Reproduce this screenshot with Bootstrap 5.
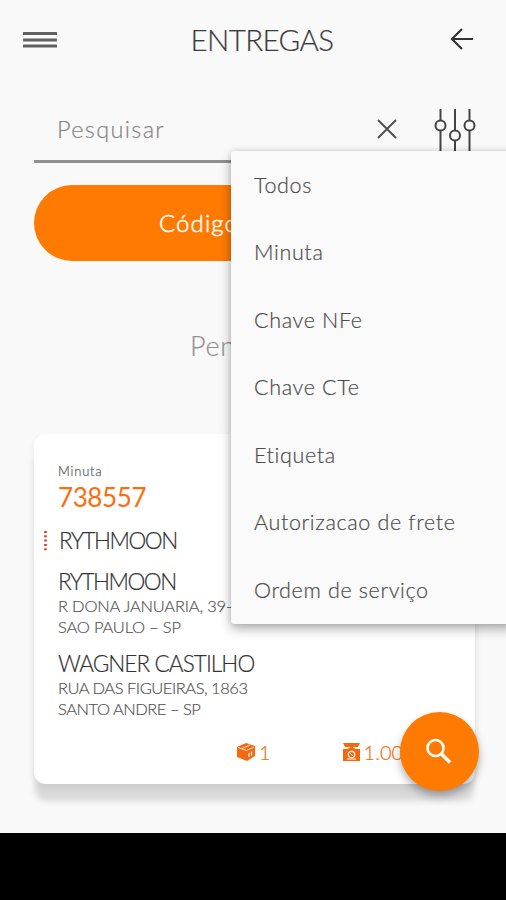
<!DOCTYPE html>
<html lang="pt-BR">
<head>
<meta charset="utf-8">
<meta name="viewport" content="width=device-width, initial-scale=1">
<title>Entregas</title>
<link href="https://cdn.jsdelivr.net/npm/bootstrap@5.3.0/dist/css/bootstrap.min.css" rel="stylesheet">
<style>
:root{--brand:#ff7a00}
body{font-family:Lato,"Liberation Sans",sans-serif;font-weight:300;background:#000;color:#444;width:506px;height:900px;overflow:hidden;-webkit-text-stroke:.2px}
svg{display:block;flex:none}
.screen{height:833px;background:#f9f9f9;overflow:hidden}
.topbar{height:78px;padding:0 33px 0 23px}
.title{font-size:29.5px;line-height:40px;color:#3c3c3c;letter-spacing:-.6px;padding:1px 0 0 17px}
.search-row{height:85px;margin-left:34px}
.search-box{width:379px;height:85px;border-bottom:3px solid #909090;padding:20px 16px 0 23px}
.hint{font-size:23.5px;line-height:30px;color:#858585;letter-spacing:1.35px}
.scan-btn{width:440px;height:76px;margin:22px 0 0 34px;border-radius:38px;background:var(--brand);color:#fff;font-size:24px;padding-left:125px;letter-spacing:1.1px;-webkit-text-stroke:.5px}
.section-label{margin:66px 0 0 190px;font-size:27px;line-height:38px;color:#929292;letter-spacing:.7px}
.delivery{width:441px;height:350px;margin:69px 0 0 34px;border:0;border-radius:12px;background:#fff;padding:27px 24px 0;box-shadow:0 18px 6px -1px rgba(0,0,0,.13),0 4px 10px rgba(0,0,0,.06)}
.caption-sm{font-size:13px;line-height:20px;color:#555;letter-spacing:.8px}
.code{font-size:26px;line-height:32px;font-weight:400;color:#ff6c0b;letter-spacing:-.4px;-webkit-text-stroke:0}
.party{font-size:22.5px;line-height:28px;color:#333;letter-spacing:-.9px}
.party-tight{letter-spacing:-1.5px}
.addr{font-size:16.5px;line-height:20.5px;color:#555;letter-spacing:-.2px}
.addr-tight{letter-spacing:-.48px}
.route{margin:14px 0 13px -14px}
.receiver{margin-top:13px}
.totals{color:#f4690e;font-size:20px;line-height:26px;margin-top:20px;padding-left:179px}
.weight{margin-left:72px}
.filter-menu{left:231px;top:151px;width:285px;height:473px;background:#fafafa;border-radius:3px;box-shadow:0 5px 12px rgba(0,0,0,.3),0 0 5px rgba(0,0,0,.13)}
.filter-menu a{height:67.5px;padding-left:23px;font-size:21.5px;color:#4c4c4c;text-decoration:none;letter-spacing:.65px}
.fab{left:400px;top:712px;width:79px;height:79px;background:var(--brand);box-shadow:0 5px 8px rgba(0,0,0,.3)}
</style>
<script src="https://cdn.jsdelivr.net/npm/bootstrap@5.3.0/dist/js/bootstrap.bundle.min.js"></script>
</head>
<body>
<main class="screen position-relative">
  <header class="topbar d-flex align-items-center justify-content-between">
    <svg width="34" height="18" viewBox="0 0 34 18" stroke="#606060" stroke-width="2.8"><path d="M0 3.500h34M0 10h34M0 16h34"/></svg>
    <div class="title">ENTREGAS</div>
    <svg width="23" height="23" viewBox="0 0 24 24" fill="none" stroke="#333" stroke-width="2.2"><path d="M24 11.5H2M12.5 1 2 11.5 12.5 22"/></svg>
  </header>
  <div class="search-row d-flex">
    <div class="search-box d-flex align-items-center justify-content-between">
      <span class="hint">Pesquisar</span>
      <svg width="20" height="20" viewBox="0 0 20 20" stroke="#505050" stroke-width="2"><path d="m1 1 18 18M19 1 1 19"/></svg>
    </div>
    <svg class="ms-3" width="52" height="85" viewBox="0 -2 52 85" fill="none" stroke="#444" stroke-width="2"><path d="M11.500 29v11.500M11.500 51v32M26 29v21.500M26 61v22M40.500 29v11.500M40.500 51v32"/><circle cx="11.500" cy="45.500" r="5"/><circle cx="26" cy="55.500" r="5"/><circle cx="40.500" cy="45.500" r="5"/></svg>
  </div>
  <div class="scan-btn d-flex align-items-center">Código de barras</div>
  <div class="section-label">Pendentes</div>
  <article class="card delivery">
    <div class="caption-sm">Minuta</div>
    <div class="code">738557</div>
    <div class="route d-flex align-items-center">
      <svg width="15" height="20" viewBox="0 0 15 20" stroke="#e5391c" stroke-width="2.6" stroke-dasharray="2 2.300"><path d="M1.500 0v20"/></svg>
      <span class="party party-tight">RYTHMOON</span>
    </div>
    <div class="party party-tight">RYTHMOON</div>
    <div class="addr">R DONA JANUARIA, 39-<br>SAO PAULO – SP</div>
    <div class="party receiver">WAGNER CASTILHO</div>
    <div class="addr addr-tight">RUA DAS FIGUEIRAS, 1863<br>SANTO ANDRE – SP</div>
    <div class="totals d-flex align-items-center">
      <svg width="18" height="18" viewBox="0 0 18 18"><path fill="#f4690e" d="M0 4 9 0l9 3v10l-8 5-10-4z"/><path d="m1 4.500 8.500 3L17 4M5 5.500l8-3.500" fill="none" stroke="#fff" stroke-width=".8"/><path d="M12 10v4M14.500 8.500v4" stroke="#fff" stroke-width="1.200"/></svg>
      <span class="ms-1">1</span>
      <svg class="weight" width="17" height="18" viewBox="0 0 17 18"><path fill="#f4690e" d="M0 0h17l-2 4H2zM7 4h3v2H7zM0 6h4l2-1h5l2 1h4v12H0z"/><circle cx="8.500" cy="11.500" r="3.200" fill="none" stroke="#fff" stroke-width="1.200"/><path d="m7 10 2.500 2.500M4 16h9" stroke="#fff"/></svg>
      <span class="ms-1">1.000</span>
    </div>
  </article>
  <nav class="filter-menu position-absolute d-flex flex-column">
    <a class="d-flex align-items-center" href="#">Todos</a>
    <a class="d-flex align-items-center" href="#">Minuta</a>
    <a class="d-flex align-items-center" href="#">Chave NFe</a>
    <a class="d-flex align-items-center" href="#">Chave CTe</a>
    <a class="d-flex align-items-center" href="#">Etiqueta</a>
    <a class="d-flex align-items-center" href="#">Autorizacao de frete</a>
    <a class="d-flex align-items-center" href="#">Ordem de serviço</a>
  </nav>
  <button class="fab btn border-0 rounded-circle position-absolute d-flex align-items-center justify-content-center p-0" aria-label="Buscar">
    <svg width="27" height="27" viewBox="0 0 27 27" fill="none" stroke="#fff" stroke-width="2.600"><circle cx="9.500" cy="10" r="8"/><path d="m15 15.500 9 9" stroke-width="3.500"/></svg>
  </button>
</main>
</body>
</html>
